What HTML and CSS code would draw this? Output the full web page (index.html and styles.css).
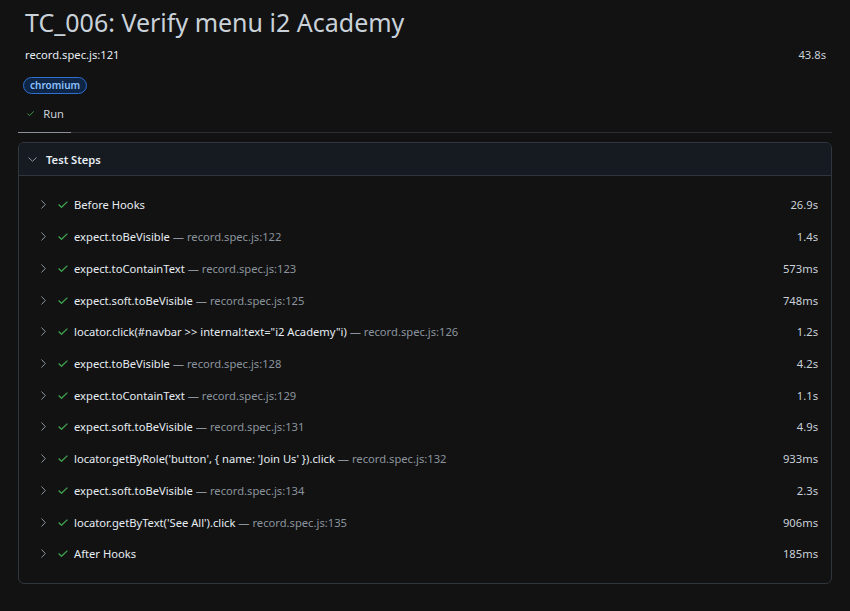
FILE: index.html
```html
<!DOCTYPE html>
<html>
<head>
<meta charset="utf-8">
<link rel="stylesheet" href="styles.css">
</head>
<body>
<div class="page">
  <h1 class="title">TC_006: Verify menu i2 Academy</h1>
  <div class="meta">
    <span class="loc">record.spec.js:121</span>
    <span class="total">43.8s</span>
  </div>
  <div class="badges"><span class="badge">chromium</span></div>
  <div class="tabs">
    <div class="tab active">
      <svg class="ico-check" viewBox="0 0 10 7" width="10" height="7"><path d="M0.6 3.6 L3.5 6.3 L9.4 0.6" fill="none" stroke="#3fa14f" stroke-width="1.3"/></svg>
      <span>Run</span>
    </div>
  </div>
  <section class="box">
    <header class="box-head">
      <svg class="ico-down" viewBox="0 0 9 5" width="9" height="5"><path d="M0.5 0.5 L4.5 4.3 L8.5 0.5" fill="none" stroke="#8b949e" stroke-width="1"/></svg>
      <span>Test Steps</span>
    </header>
    <div class="steps">
      <div class="step"><svg class="ico-right" viewBox="0 0 5 9" width="5" height="9"><path d="M0.5 0.5 L4.3 4.5 L0.5 8.5" fill="none" stroke="#8b949e" stroke-width="1"/></svg><svg class="ico-check" viewBox="0 0 10 7" width="10" height="7"><path d="M0.6 3.6 L3.5 6.3 L9.4 0.6" fill="none" stroke="#3fa14f" stroke-width="1.3"/></svg><span class="name">Before Hooks</span><span class="dur">26.9s</span></div>
      <div class="step"><svg class="ico-right" viewBox="0 0 5 9" width="5" height="9"><path d="M0.5 0.5 L4.3 4.5 L0.5 8.5" fill="none" stroke="#8b949e" stroke-width="1"/></svg><svg class="ico-check" viewBox="0 0 10 7" width="10" height="7"><path d="M0.6 3.6 L3.5 6.3 L9.4 0.6" fill="none" stroke="#3fa14f" stroke-width="1.3"/></svg><span class="name">expect.toBeVisible <span class="src">— record.spec.js:122</span></span><span class="dur">1.4s</span></div>
      <div class="step"><svg class="ico-right" viewBox="0 0 5 9" width="5" height="9"><path d="M0.5 0.5 L4.3 4.5 L0.5 8.5" fill="none" stroke="#8b949e" stroke-width="1"/></svg><svg class="ico-check" viewBox="0 0 10 7" width="10" height="7"><path d="M0.6 3.6 L3.5 6.3 L9.4 0.6" fill="none" stroke="#3fa14f" stroke-width="1.3"/></svg><span class="name">expect.toContainText <span class="src">— record.spec.js:123</span></span><span class="dur">573ms</span></div>
      <div class="step"><svg class="ico-right" viewBox="0 0 5 9" width="5" height="9"><path d="M0.5 0.5 L4.3 4.5 L0.5 8.5" fill="none" stroke="#8b949e" stroke-width="1"/></svg><svg class="ico-check" viewBox="0 0 10 7" width="10" height="7"><path d="M0.6 3.6 L3.5 6.3 L9.4 0.6" fill="none" stroke="#3fa14f" stroke-width="1.3"/></svg><span class="name">expect.soft.toBeVisible <span class="src">— record.spec.js:125</span></span><span class="dur">748ms</span></div>
      <div class="step"><svg class="ico-right" viewBox="0 0 5 9" width="5" height="9"><path d="M0.5 0.5 L4.3 4.5 L0.5 8.5" fill="none" stroke="#8b949e" stroke-width="1"/></svg><svg class="ico-check" viewBox="0 0 10 7" width="10" height="7"><path d="M0.6 3.6 L3.5 6.3 L9.4 0.6" fill="none" stroke="#3fa14f" stroke-width="1.3"/></svg><span class="name">locator.click(#navbar &gt;&gt; internal:text="i2 Academy"i) <span class="src">— record.spec.js:126</span></span><span class="dur">1.2s</span></div>
      <div class="step"><svg class="ico-right" viewBox="0 0 5 9" width="5" height="9"><path d="M0.5 0.5 L4.3 4.5 L0.5 8.5" fill="none" stroke="#8b949e" stroke-width="1"/></svg><svg class="ico-check" viewBox="0 0 10 7" width="10" height="7"><path d="M0.6 3.6 L3.5 6.3 L9.4 0.6" fill="none" stroke="#3fa14f" stroke-width="1.3"/></svg><span class="name">expect.toBeVisible <span class="src">— record.spec.js:128</span></span><span class="dur">4.2s</span></div>
      <div class="step"><svg class="ico-right" viewBox="0 0 5 9" width="5" height="9"><path d="M0.5 0.5 L4.3 4.5 L0.5 8.5" fill="none" stroke="#8b949e" stroke-width="1"/></svg><svg class="ico-check" viewBox="0 0 10 7" width="10" height="7"><path d="M0.6 3.6 L3.5 6.3 L9.4 0.6" fill="none" stroke="#3fa14f" stroke-width="1.3"/></svg><span class="name">expect.toContainText <span class="src">— record.spec.js:129</span></span><span class="dur">1.1s</span></div>
      <div class="step"><svg class="ico-right" viewBox="0 0 5 9" width="5" height="9"><path d="M0.5 0.5 L4.3 4.5 L0.5 8.5" fill="none" stroke="#8b949e" stroke-width="1"/></svg><svg class="ico-check" viewBox="0 0 10 7" width="10" height="7"><path d="M0.6 3.6 L3.5 6.3 L9.4 0.6" fill="none" stroke="#3fa14f" stroke-width="1.3"/></svg><span class="name">expect.soft.toBeVisible <span class="src">— record.spec.js:131</span></span><span class="dur">4.9s</span></div>
      <div class="step"><svg class="ico-right" viewBox="0 0 5 9" width="5" height="9"><path d="M0.5 0.5 L4.3 4.5 L0.5 8.5" fill="none" stroke="#8b949e" stroke-width="1"/></svg><svg class="ico-check" viewBox="0 0 10 7" width="10" height="7"><path d="M0.6 3.6 L3.5 6.3 L9.4 0.6" fill="none" stroke="#3fa14f" stroke-width="1.3"/></svg><span class="name">locator.getByRole('button', { name: 'Join Us' }).click <span class="src">— record.spec.js:132</span></span><span class="dur">933ms</span></div>
      <div class="step"><svg class="ico-right" viewBox="0 0 5 9" width="5" height="9"><path d="M0.5 0.5 L4.3 4.5 L0.5 8.5" fill="none" stroke="#8b949e" stroke-width="1"/></svg><svg class="ico-check" viewBox="0 0 10 7" width="10" height="7"><path d="M0.6 3.6 L3.5 6.3 L9.4 0.6" fill="none" stroke="#3fa14f" stroke-width="1.3"/></svg><span class="name">expect.soft.toBeVisible <span class="src">— record.spec.js:134</span></span><span class="dur">2.3s</span></div>
      <div class="step"><svg class="ico-right" viewBox="0 0 5 9" width="5" height="9"><path d="M0.5 0.5 L4.3 4.5 L0.5 8.5" fill="none" stroke="#8b949e" stroke-width="1"/></svg><svg class="ico-check" viewBox="0 0 10 7" width="10" height="7"><path d="M0.6 3.6 L3.5 6.3 L9.4 0.6" fill="none" stroke="#3fa14f" stroke-width="1.3"/></svg><span class="name">locator.getByText('See All').click <span class="src">— record.spec.js:135</span></span><span class="dur">906ms</span></div>
      <div class="step"><svg class="ico-right" viewBox="0 0 5 9" width="5" height="9"><path d="M0.5 0.5 L4.3 4.5 L0.5 8.5" fill="none" stroke="#8b949e" stroke-width="1"/></svg><svg class="ico-check" viewBox="0 0 10 7" width="10" height="7"><path d="M0.6 3.6 L3.5 6.3 L9.4 0.6" fill="none" stroke="#3fa14f" stroke-width="1.3"/></svg><span class="name">After Hooks</span><span class="dur">185ms</span></div>
    </div>
  </section>
</div>
</body>
</html>
```

FILE: styles.css
```css
html, body {
  margin: 0;
  padding: 0;
  background: #121212;
}
body {
  font-family: "Noto Sans", "Open Sans", sans-serif;
  color: #c9d1d9;
}
.page {
  padding: 0 18px;
}
.title {
  margin: 0;
  padding: 4px 0 0 7px;
  height: 38px;
  font-size: 25px;
  font-weight: 400;
  line-height: 36px;
  color: #c9d1d9;
}
.meta {
  display: flex;
  justify-content: space-between;
  align-items: center;
  height: 24px;
  padding: 0 6px 0 7px;
  font-size: 11.2px;
}
.meta .loc { color: #e6edf3; }
.meta .total { color: #c9d1d9; }
.badges {
  height: 16px;
  padding: 6px 0 0 5px;
}
.badge {
  display: inline-flex;
  align-items: center;
  height: 15px;
  padding: 0 6px;
  border: 1px solid #2f6fce;
  border-radius: 9px;
  background: #0e2545;
  color: #8cc1ff;
  font-size: 10px;
  font-weight: 600;
  line-height: 15px;
}
.tabs {
  display: flex;
  margin-top: 9px;
  border-bottom: 1px solid #2a2d31;
}
.tab {
  display: flex;
  align-items: center;
  gap: 9px;
  height: 32px;
  padding: 0 7px 3px 9px;
  font-size: 11.2px;
  color: #c9d1d9;
  width: 37px;
  margin-bottom: -1px;
}
.tab.active { border-bottom: 1px solid #8b8f96; }
.box {
  margin-top: 9px;
  border: 1px solid #30363d;
  border-radius: 6px;
  overflow: hidden;
}
.box-head {
  display: flex;
  align-items: center;
  gap: 9px;
  height: 32px;
  padding-left: 9px;
  background: #161b22;
  border-bottom: 1px solid #30363d;
  font-size: 11.2px;
  font-weight: 600;
  color: #e6edf3;
}
.steps {
  padding: 13px 13px 13px 0;
}
.step {
  display: flex;
  align-items: center;
  height: 31.73px;
  font-size: 11.2px;
  white-space: nowrap;
}
.ico-right { margin-left: 22px; flex: none; }
.step .ico-check { margin-left: 12px; flex: none; }
.step .name { margin-left: 6px; flex: 1; color: #e6edf3; }
.step .src { color: #8b949e; }
.step .dur { color: #c9d1d9; }
```
